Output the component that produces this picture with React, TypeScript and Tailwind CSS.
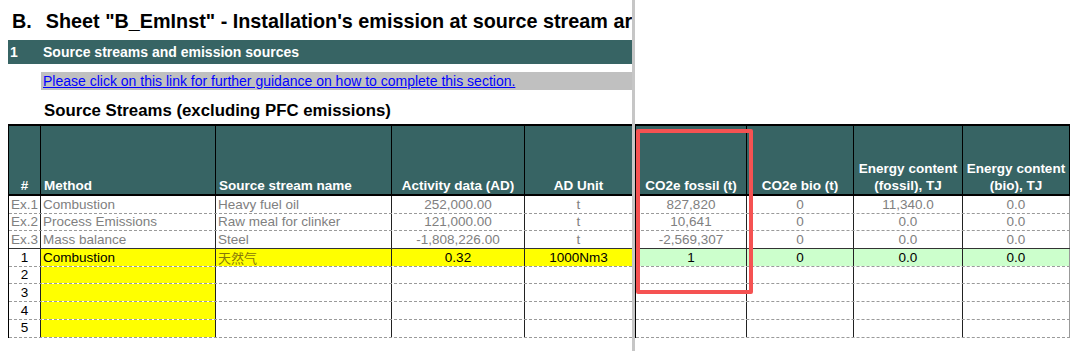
import React from 'react';

const TEAL = 'bg-[#376464]';

interface Cell {
  text?: string;
  align?: 'left' | 'center';
  bg?: string;
  tone?: string;
  cjk?: boolean;
}

const leftCols = ['w-[32px]', 'w-[175px]', 'w-[176px]', 'w-[133px]', 'w-[107px]'];
const rightCols = ['w-[111px]', 'w-[107px]', 'w-[109px]', 'w-[107px]'];

const grey = 'text-[#808080]';
const yellow = 'bg-[#ffff00]';
const green = 'bg-[#ccffcc]';

const exampleLeft: string[][] = [
  ['Ex.1', 'Combustion', 'Heavy fuel oil', '252,000.00', 't'],
  ['Ex.2', 'Process Emissions', 'Raw meal for clinker', '121,000.00', 't'],
  ['Ex.3', 'Mass balance', 'Steel', '-1,808,226.00', 't'],
];

const exampleRight: string[][] = [
  ['827,820', '0', '11,340.0', '0.0'],
  ['10,641', '0', '0.0', '0.0'],
  ['-2,569,307', '0', '0.0', '0.0'],
];

// left pane rows (examples, the filled row, then empty rows)
const leftRows: Cell[][] = [
  ...exampleLeft.map(r => [
    { text: r[0], align: 'left' as const, tone: grey },
    { text: r[1], align: 'left' as const, tone: grey },
    { text: r[2], align: 'left' as const, tone: grey },
    { text: r[3], align: 'center' as const, tone: grey },
    { text: r[4], align: 'center' as const, tone: grey },
  ]),
  [
    { text: '1', align: 'center' },
    { text: 'Combustion', align: 'left', bg: yellow },
    { text: '天然气', align: 'left', bg: yellow, tone: 'text-[#86780a]', cjk: true },
    { text: '0.32', align: 'center', bg: yellow },
    { text: '1000Nm3', align: 'center', bg: yellow },
  ],
  ...[2, 3, 4, 5].map(n => [
    { text: String(n), align: 'center' as const },
    { bg: yellow },
    {},
    {},
    {},
  ]),
];

const rightRows: Cell[][] = [
  ...exampleRight.map(r => r.map(t => ({ text: t, align: 'center' as const, tone: grey }))),
  ['1', '0', '0.0', '0.0'].map(t => ({ text: t, align: 'center' as const, bg: green })),
  ...[0, 1, 2, 3].map(() => [{}, {}, {}, {}]),
];

function HeaderRow({ cols, labels, last }: { cols: string[]; labels: { t: React.ReactNode; align: 'left' | 'center' }[]; last?: boolean }) {
  return (
    <div className={`flex h-[72px] border-t-2 border-b-2 border-black ${TEAL}`}>
      {labels.map((l, i) => (
        <div
          key={i}
          className={`${cols[i]} shrink-0 flex items-end text-white font-bold text-[13.5px] leading-[17px] ${
            l.align === 'center' ? 'justify-center text-center' : 'justify-start pl-[3px]'
          } ${i < cols.length - 1 || last ? 'border-r border-black' : ''}`}
        >
          <span>{l.t}</span>
        </div>
      ))}
    </div>
  );
}

function BodyRows({ cols, rows, last }: { cols: string[]; rows: Cell[][]; last?: boolean }) {
  return (
    <div>
      {rows.map((row, ri) => (
        <div
          key={ri}
          className={`flex h-[17.7px] border-b ${ri === 2 ? 'border-solid border-[#333]' : 'border-dashed border-[#9a9a9a]'}`}
        >
          {row.map((c, ci) => (
            <div
              key={ci}
              className={`${cols[ci]} shrink-0 flex items-center overflow-hidden whitespace-nowrap text-[13.5px] leading-none ${
                c.bg ?? 'bg-white'
              } ${c.tone ?? 'text-black'} ${c.align === 'center' ? 'justify-center' : 'justify-start pl-[2px]'} ${
                ci < cols.length - 1 ? 'border-r border-[#222]' : last ? 'border-r border-[#999]' : ''
              } ${c.cjk ? "font-['Noto_Sans_CJK_SC',sans-serif] text-[13px]" : ''}`}
            >
              {c.text}
            </div>
          ))}
        </div>
      ))}
    </div>
  );
}

export default function App() {
  return (
    <div className="w-[1080px] h-[351px] bg-white flex overflow-hidden font-['Liberation_Sans',Arial,sans-serif]">
      {/* left frozen pane */}
      <div className="w-[632px] shrink-0 overflow-hidden">
        <div className="h-[40px] flex items-center pt-[3px] pl-[12px] whitespace-nowrap text-[19.8px] font-bold text-black">
          <span>B.</span>
          <span className="ml-[14px]">Sheet "B_EmInst" - Installation's emission at source stream ar</span>
        </div>
        <div className={`ml-[8px] h-[24px] flex items-center text-white font-bold text-[14px] ${TEAL}`}>
          <span className="w-[35px] pl-[2px]">1</span>
          <span>Source streams and emission sources</span>
        </div>
        <div className="ml-[41px] mt-[8px] h-[18px] flex items-center pl-[2px] bg-[#c0c0c0] text-[14px]">
          <a href="#" className="text-[#0000ff] underline">
            Please click on this link for further guidance on how to complete this section.
          </a>
        </div>
        <div className="h-[34px] flex items-end pl-[44px] pb-[1px] text-[16.8px] font-bold text-black whitespace-nowrap">
          Source Streams (excluding PFC emissions)
        </div>
        <div className="ml-[8px] border-l border-black">
          <HeaderRow
            cols={leftCols}
            labels={[
              { t: '#', align: 'center' },
              { t: 'Method', align: 'left' },
              { t: 'Source stream name', align: 'left' },
              { t: 'Activity data (AD)', align: 'center' },
              { t: 'AD Unit', align: 'center' },
            ]}
          />
          <BodyRows cols={leftCols} rows={leftRows} />
        </div>
      </div>

      {/* split bar */}
      <div className="w-[3px] shrink-0 bg-[#c6c6c6]" />

      {/* right pane */}
      <div className="relative flex-1 pt-[124px]">
        <div className="w-[435px] border-l border-black">
          <HeaderRow
            cols={rightCols}
            last
            labels={[
              { t: 'CO2e fossil (t)', align: 'center' },
              { t: 'CO2e bio (t)', align: 'center' },
              { t: <>Energy content<br />(fossil), TJ</>, align: 'center' },
              { t: <>Energy content<br />(bio), TJ</>, align: 'center' },
            ]}
          />
          <BodyRows cols={rightCols} rows={rightRows} last />
        </div>
        {/* highlight box */}
        <div className="absolute left-[1px] top-[129px] w-[117px] h-[165px] border-4 border-[#f55252] rounded-[2px]" />
      </div>
    </div>
  );
}
